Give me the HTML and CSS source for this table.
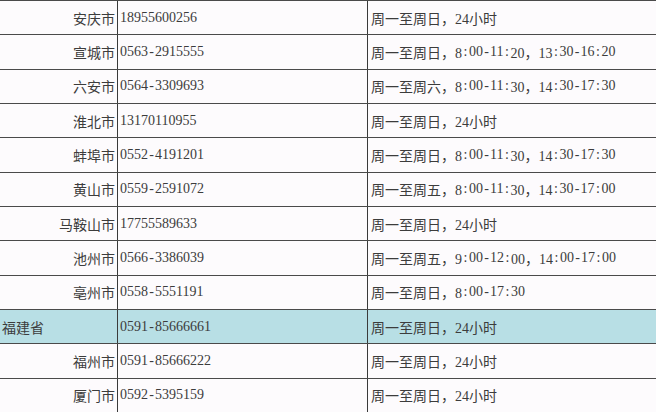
FILE: index.html
```html
<!DOCTYPE html>
<html lang="zh-CN">
<head>
<meta charset="utf-8">
<title>服务时间</title>
<link rel="stylesheet" href="styles.css">
</head>
<body>
<div class="table">
  <div class="row"><div class="city">安庆市</div><div class="tel">18955600256</div><div class="time">周一至周日，24小时</div></div>
  <div class="row"><div class="city">宣城市</div><div class="tel">0563<span class="h">-</span>2915555</div><div class="time">周一至周日，8<span class="h">:</span>00<span class="h">-</span>11<span class="h">:</span>20，13<span class="h">:</span>30<span class="h">-</span>16<span class="h">:</span>20</div></div>
  <div class="row"><div class="city">六安市</div><div class="tel">0564<span class="h">-</span>3309693</div><div class="time">周一至周六，8<span class="h">:</span>00<span class="h">-</span>11<span class="h">:</span>30，14<span class="h">:</span>30<span class="h">-</span>17<span class="h">:</span>30</div></div>
  <div class="row"><div class="city">淮北市</div><div class="tel">13170110955</div><div class="time">周一至周日，24小时</div></div>
  <div class="row"><div class="city">蚌埠市</div><div class="tel">0552<span class="h">-</span>4191201</div><div class="time">周一至周日，8<span class="h">:</span>00<span class="h">-</span>11<span class="h">:</span>30，14<span class="h">:</span>30<span class="h">-</span>17<span class="h">:</span>30</div></div>
  <div class="row"><div class="city">黄山市</div><div class="tel">0559<span class="h">-</span>2591072</div><div class="time">周一至周五，8<span class="h">:</span>00<span class="h">-</span>11<span class="h">:</span>30，14<span class="h">:</span>30<span class="h">-</span>17<span class="h">:</span>00</div></div>
  <div class="row"><div class="city">马鞍山市</div><div class="tel">17755589633</div><div class="time">周一至周日，24小时</div></div>
  <div class="row"><div class="city">池州市</div><div class="tel">0566<span class="h">-</span>3386039</div><div class="time">周一至周五，9<span class="h">:</span>00<span class="h">-</span>12<span class="h">:</span>00，14<span class="h">:</span>00<span class="h">-</span>17<span class="h">:</span>00</div></div>
  <div class="row"><div class="city">亳州市</div><div class="tel">0558<span class="h">-</span>5551191</div><div class="time">周一至周日，8<span class="h">:</span>00<span class="h">-</span>17<span class="h">:</span>30</div></div>
  <div class="row province"><div class="city">福建省</div><div class="tel">0591<span class="h">-</span>85666661</div><div class="time">周一至周日，24小时</div></div>
  <div class="row"><div class="city">福州市</div><div class="tel">0591<span class="h">-</span>85666222</div><div class="time">周一至周日，24小时</div></div>
  <div class="row"><div class="city">厦门市</div><div class="tel">0592<span class="h">-</span>5395159</div><div class="time">周一至周日，24小时</div></div>
</div>
</body>
</html>
```

FILE: styles.css
```css
html, body {
  margin: 0;
  padding: 0;
  background: #fdfbfd;
}
body {
  width: 656px;
  height: 412px;
  overflow: hidden;
  font-family: "Liberation Serif", "Noto Sans CJK SC", serif;
  font-size: 14px;
  color: #3c3c3c;
}
.table {
  display: flex;
  flex-direction: column;
}
.row {
  display: grid;
  grid-template-columns: 117px 250px 1fr;
  height: 34.33px;
  box-sizing: border-box;
  border-top: 1.5px solid #4a4a4a;
}
.row > div {
  display: flex;
  align-items: center;
  white-space: nowrap;
}
.city {
  justify-content: flex-end;
  padding-right: 2px;
}
.tel {
  border-left: 1.5px solid #3a3a3a;
  padding-left: 2px;
}
.time {
  border-left: 1.5px solid #3a3a3a;
  padding-left: 3px;
}
.province {
  background: #b8dfe5;
}
.province .city {
  justify-content: flex-start;
  padding-left: 2px;
}
.h {
  display: inline-block;
  width: 7px;
  text-align: center;
}
```
